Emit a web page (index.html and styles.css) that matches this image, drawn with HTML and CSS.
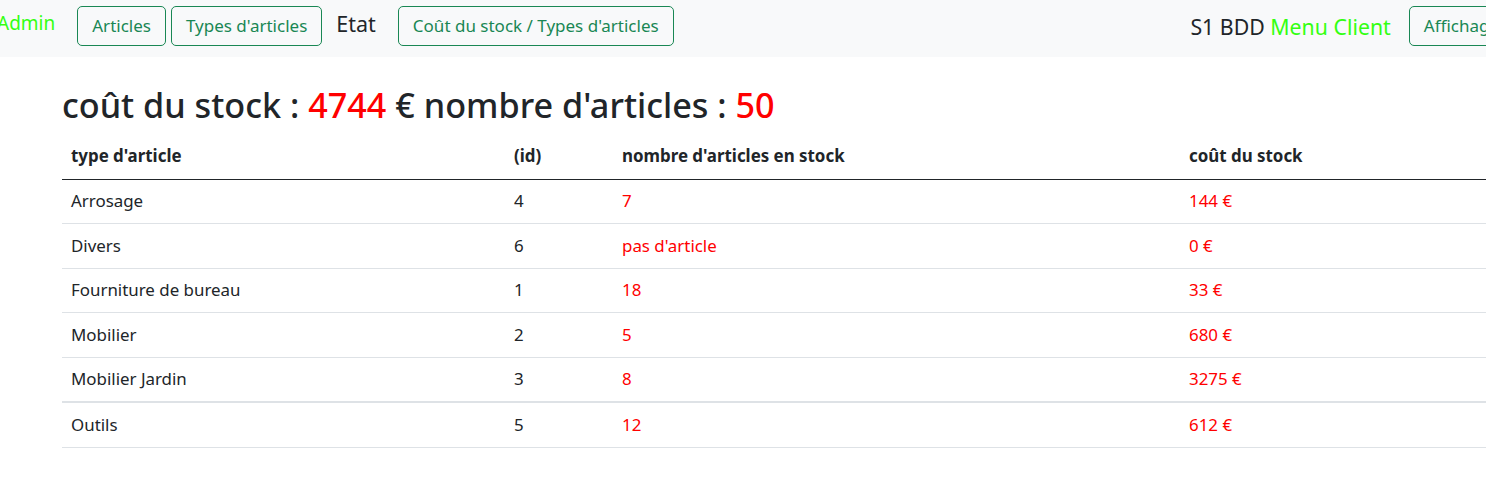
FILE: index.html
```html
<!DOCTYPE html>
<html lang="fr">
<head>
<meta charset="utf-8">
<title>Etat - coût du stock</title>
<link rel="stylesheet" href="styles.css">
</head>
<body>
<nav class="navbar">
  <a class="nav-admin" href="#">Admin</a>
  <div class="nav-group">
    <a class="btn" href="#">Articles</a>
    <a class="btn" href="#">Types d'articles</a>
  </div>
  <span class="nav-text">Etat</span>
  <a class="btn" href="#">Coût du stock / Types d'articles</a>
  <div class="nav-spacer"></div>
  <span class="nav-brand">S1 BDD <span class="lime">Menu Client</span></span>
  <a class="btn btn-last" href="#">Affichage</a>
</nav>
<main class="content">
  <h2 class="title">coût du stock : <span class="red">4744</span> € nombre d'articles : <span class="red">50</span></h2>
  <table class="stock-table">
    <thead>
      <tr><th class="c1">type d'article</th><th class="c2">(id)</th><th class="c3">nombre d'articles en stock</th><th class="c4">coût du stock</th></tr>
    </thead>
    <tbody>
      <tr><td>Arrosage</td><td>4</td><td class="red">7</td><td class="red">144 €</td></tr>
      <tr><td>Divers</td><td>6</td><td class="red">pas d'article</td><td class="red">0 €</td></tr>
      <tr><td>Fourniture de bureau</td><td>1</td><td class="red">18</td><td class="red">33 €</td></tr>
      <tr><td>Mobilier</td><td>2</td><td class="red">5</td><td class="red">680 €</td></tr>
      <tr class="row-sep"><td>Mobilier Jardin</td><td>3</td><td class="red">8</td><td class="red">3275 €</td></tr>
      <tr><td>Outils</td><td>5</td><td class="red">12</td><td class="red">612 €</td></tr>
    </tbody>
  </table>
</main>
</body>
</html>
```
FILE: styles.css
```css
html, body {
  margin: 0;
  padding: 0;
  overflow: hidden;
  background: #fff;
}
body {
  font-family: "Noto Sans", "DejaVu Sans", sans-serif;
  color: #212529;
  font-size: 17px;
}
a { text-decoration: none; }

.navbar {
  display: flex;
  align-items: center;
  height: 57px;
  background: #f8f9fa;
  white-space: nowrap;
  box-sizing: border-box;
  padding-bottom: 5px;
}
.nav-admin {
  color: #33ff11;
  font-size: 19px;
  margin-left: -3px;
  margin-right: 22px;
  padding-bottom: 6px;
}
.nav-group {
  display: flex;
  gap: 5px;
}
.btn {
  display: inline-block;
  border: 1px solid #198754;
  color: #198754;
  border-radius: 5px;
  font-size: 17px;
  line-height: 24px;
  padding: 7px 14px;
  background: transparent;
  flex-shrink: 0;
}
.nav-text {
  font-size: 21.5px;
  color: #212529;
  margin: 0 22px 0 14px;
  padding-bottom: 6px;
}
.nav-spacer { flex: 1; }
.nav-brand {
  font-size: 21.3px;
  color: #212529;
  margin-right: 18px;
}
.lime { color: #33ff11; }
.btn-last { margin-right: -28px; }

.content {
  padding: 27px 0 0 62px;
}
.title {
  margin: 0 0 8px 0;
  font-size: 34.2px;
  font-weight: 500;
  line-height: 42px;
}
.red { color: #ff0000; }

.stock-table {
  border-collapse: collapse;
  width: 1560px;
}
.stock-table th, .stock-table td {
  text-align: left;
  padding: 9.5px 9px 10px;
  line-height: 24px;
  font-size: 16.9px;
  border-bottom: 1px solid #dee2e6;
}
.stock-table th {
  font-weight: 700;
  border-bottom: 1px solid #212529;
  padding-bottom: 11px;
}
.stock-table .c1 { width: 425px; }
.stock-table .c2 { width: 90px; }
.stock-table .c3 { width: 549px; }
.stock-table .row-sep td { border-bottom: 2px solid #dee2e6; }
```
